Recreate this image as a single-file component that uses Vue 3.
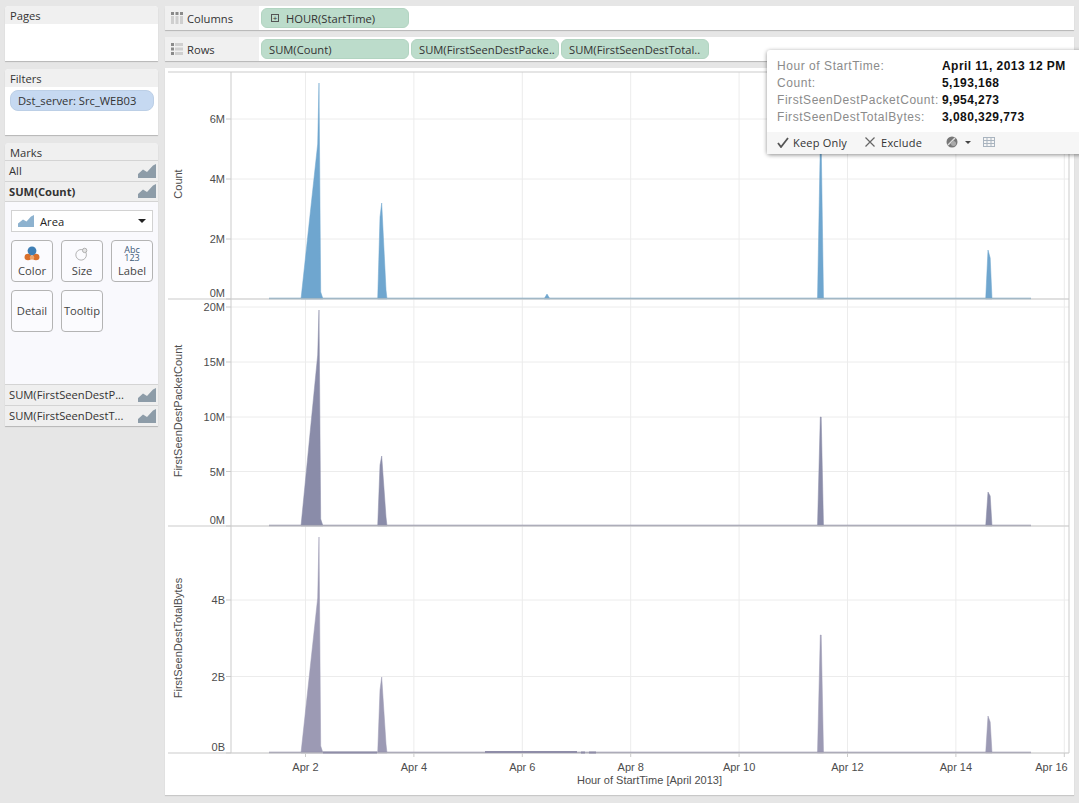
<template>
  <div class="page">
    <!-- left side cards -->
    <aside class="sidebar">
      <section class="card pages">
        <div class="card-title">Pages</div>
      </section>

      <section class="card filters">
        <div class="card-title">Filters</div>
        <div class="filter-pill">Dst_server: Src_WEB03</div>
      </section>

      <section class="card marks">
        <div class="card-title marks-title">Marks</div>
        <div v-for="row in topRows" :key="row.label" class="mark-row" :class="{ bold: row.bold }">
          <span>{{ row.label }}</span>
          <svg class="area-icon" viewBox="0 0 18 14"><path d="M0 14V10L5 5.5 9 8 15 1.5 18 0V14Z" /></svg>
        </div>

        <div class="marks-panel">
          <div class="mark-type">
            <svg class="type-icon" viewBox="0 0 16 12"><path d="M0 12V8.500L5 4.500 8.500 6.500 13 1.500 16 0V12Z" /></svg>
            <span class="type-name">Area</span>
            <span class="type-caret"></span>
          </div>

          <div class="mark-buttons">
            <div class="mark-btn with-icon">
              <svg class="btn-icon" viewBox="0 0 18 17">
                <ellipse cx="4.5" cy="12.5" rx="4" ry="3.6" fill="#d9702c" />
                <ellipse cx="13.5" cy="12.5" rx="4" ry="3.6" fill="#d9702c" />
                <circle cx="9" cy="13" r="2.5" fill="#eea46b" />
                <circle cx="9" cy="5.5" r="5" fill="#3f7fb5" />
              </svg>
              <span>Color</span>
            </div>
            <div class="mark-btn with-icon">
              <svg class="btn-icon" viewBox="0 0 18 17" fill="none" stroke="#a8a8a8">
                <circle cx="8" cy="10" r="6" />
                <circle cx="12" cy="5" r="2.5" fill="#e4e4e4" />
              </svg>
              <span>Size</span>
            </div>
            <div class="mark-btn with-icon">
              <div class="abc"><span>Abc</span><span>123</span></div>
              <span>Label</span>
            </div>
            <div class="mark-btn">Detail</div>
            <div class="mark-btn">Tooltip</div>
          </div>
        </div>

        <div v-for="row in bottomRows" :key="row" class="mark-row">
          <span>{{ row }}</span>
          <svg class="area-icon" viewBox="0 0 18 14"><path d="M0 14V10L5 5.5 9 8 15 1.5 18 0V14Z" /></svg>
        </div>
      </section>
    </aside>

    <main class="main">
      <div class="shelf">
        <div class="shelf-label">
          <svg class="shelf-icon" viewBox="0 0 12 12">
            <path d="M0 0h3v3H0zM4.500 0h3v3h-3zM9 0h3v3H9z" fill="#8a8a8a" />
            <path d="M0 4h3v8H0zM4.500 4h3v8h-3zM9 4h3v8H9z" fill="#cfcfcf" />
          </svg>
          Columns
        </div>
        <div class="pill">
          <span class="plus-box">+</span>
          <span>HOUR(StartTime)</span>
        </div>
      </div>

      <div class="shelf">
        <div class="shelf-label">
          <svg class="shelf-icon" viewBox="0 0 12 12">
            <path d="M0 0h3v3H0zM0 4.500h3v3H0zM0 9h3v3H0z" fill="#8a8a8a" />
            <path d="M4 0h8v3H4zM4 4.500h8v3H4zM4 9h8v3H4z" fill="#cfcfcf" />
          </svg>
          Rows
        </div>
        <div class="pill">SUM(Count)</div>
        <div class="pill">SUM(FirstSeenDestPacke..</div>
        <div class="pill">SUM(FirstSeenDestTotal..</div>
      </div>

      <div class="chart-card">
        <svg class="chart" viewBox="165 68 909 727">
          <!-- vertical grid -->
          <line v-for="t in xTicks" :key="t.label" class="grid" :x1="t.x" :x2="t.x" y1="72" y2="753" />

          <g v-for="pane in panes" :key="pane.title">
            <line v-for="t in pane.ticks" :key="t.label" class="grid" x1="231" x2="1069" :y1="t.y" :y2="t.y" />
            <line v-for="t in pane.ticks" :key="'m' + t.label" class="axis" x1="226" x2="231" :y1="t.y" :y2="t.y" />
            <text
              v-for="t in pane.ticks"
              :key="'l' + t.label"
              class="tick"
              x="225"
              :y="t.labelY ?? t.y + 4"
              text-anchor="end"
            >{{ t.label }}</text>
            <text
              class="tick"
              text-anchor="middle"
              :transform="`translate(182 ${pane.titleY}) rotate(-90)`"
            >{{ pane.title }}</text>
            <path :d="pane.area" :fill="pane.fill" :stroke="pane.fill" stroke-width="0.5" />
            <line x1="269" x2="1031" :y1="pane.base - 0.5" :y2="pane.base - 0.5" :stroke="pane.line" stroke-width="1.5" />
            <line class="axis" x1="168" x2="1069" :y1="pane.base" :y2="pane.base" />
          </g>

          <line class="axis" x1="168" x2="1069" y1="72" y2="72" />
          <line class="axis" x1="231" x2="231" y1="72" y2="753" />
          <line class="axis" x1="1069" x2="1069" y1="72" y2="753" />

          <!-- small noise on the bytes pane -->
          <path d="M323 752.500H377M485 752H577M581 752.500H585M589 752.500H596" stroke="#8f8da8" stroke-width="2" />

          <g v-for="t in xTicks" :key="'x' + t.label">
            <line class="axis" :x1="t.x" :x2="t.x" y1="753" y2="757" />
            <text class="tick" :x="t.labelX" y="771" text-anchor="middle">{{ t.label }}</text>
          </g>
          <text class="tick" x="649.500" y="784" text-anchor="middle">Hour of StartTime [April 2013]</text>
        </svg>
      </div>
    </main>

    <!-- hover tooltip -->
    <div class="tooltip">
      <div class="tip-body">
        <template v-for="row in tipRows" :key="row[0]">
          <span class="tip-label">{{ row[0] }}</span>
          <span class="tip-value">{{ row[1] }}</span>
        </template>
      </div>
      <div class="tip-actions">
        <svg class="tip-check" viewBox="0 0 12 11" fill="none" stroke="#555" stroke-width="1.800">
          <path d="M1 6l3 4 7-9" />
        </svg>
        <span class="keep">Keep Only</span>
        <svg class="tip-x" viewBox="0 0 10 10" fill="none" stroke="#666" stroke-width="1.200">
          <path d="M0.500 0.500l9 9M9.500 0.500l-9 9" />
        </svg>
        <span class="exclude">Exclude</span>
        <svg class="tip-set" viewBox="0 0 12 12">
          <circle cx="6" cy="6" r="5.500" fill="#777" />
          <path d="M2 9L9 2" stroke="#ddd" stroke-width="1.500" />
          <circle cx="7.500" cy="7.500" r="2.500" fill="#aaa" />
        </svg>
        <span class="tip-caret"></span>
        <svg class="tip-grid" viewBox="0 0 12 10" fill="none" stroke="#a9b4bf">
          <path d="M0 .5h12M0 3.500h12M0 6.500h12M0 9.500h12M.5 0v10M4 0v10M8 0v10M11.500 0v10" />
        </svg>
      </div>
    </div>
  </div>
</template>

<script setup>
const topRows = [
  { label: 'All', bold: false },
  { label: 'SUM(Count)', bold: true }
]
const bottomRows = ['SUM(FirstSeenDestP...', 'SUM(FirstSeenDestT...']

const tipRows = [
  ['Hour of StartTime:', 'April 11, 2013 12 PM'],
  ['Count:', '5,193,168'],
  ['FirstSeenDestPacketCount:', '9,954,273'],
  ['FirstSeenDestTotalBytes:', '3,080,329,773']
]

// 2 days = 108.4px on the time axis, last label is pulled in so it fits
const xTicks = [2, 4, 6, 8, 10, 12, 14, 16].map((d) => {
  const x = 305.5 + (d - 2) * 54.2
  return { label: `Apr ${d}`, x, labelX: d === 16 ? 1051.5 : x }
})

// builds the area outline from spike tops, b is the baseline
function spikes(b, a, c, d, e, e2, small) {
  let p = `M301 ${b}L317.7 ${a[1]}L319 ${a[0]}L320.7 ${b - 7}L323 ${b}Z`
  p += `M377.7 ${b}L380 ${c[1]}L381.7 ${c[0]}L386 ${b - 9}L387 ${b}Z`
  if (small) p += `M544 ${b}L547 ${small}L550 ${b}Z`
  p += `M817.5 ${b}L820.3 ${d}L821.2 ${d}L823.5 ${b}Z`
  p += `M985.7 ${b}L988 ${e}L990.2 ${e2}L992 ${b}Z`
  return p
}

const panes = [
  {
    title: 'Count',
    titleY: 184,
    base: 299,
    fill: '#6fa6cf',
    line: '#7aa5c2',
    area: spikes(299, [83, 144], [203, 217], 143, 250, 258, 294),
    ticks: [
      { label: '6M', y: 119 },
      { label: '4M', y: 179 },
      { label: '2M', y: 239 },
      { label: '0M', y: 299, labelY: 297 }
    ]
  },
  {
    title: 'FirstSeenDestPacketCount',
    titleY: 411,
    base: 526,
    fill: '#8a8ca9',
    line: '#8f90a8',
    area: spikes(526, [310, 355], [456, 465], 417, 492, 496),
    ticks: [
      { label: '20M', y: 307, labelY: 311 },
      { label: '15M', y: 362 },
      { label: '10M', y: 417 },
      { label: '5M', y: 471.5 },
      { label: '0M', y: 526, labelY: 524 }
    ]
  },
  {
    title: 'FirstSeenDestTotalBytes',
    titleY: 638,
    base: 753,
    fill: '#9c9ab4',
    line: '#8f8da8',
    area: spikes(753, [537, 598], [677, 690], 635, 716, 722),
    ticks: [
      { label: '4B', y: 600 },
      { label: '2B', y: 676.5 },
      { label: '0B', y: 753, labelY: 751 }
    ]
  }
]
</script>

<style>
html,
body {
  margin: 0;
  background: #e6e6e6;
  overflow: hidden;
}
</style>

<style scoped>
.page {
  position: relative;
  box-sizing: border-box;
  width: 1079px;
  height: 803px;
  padding: 6px 5px 8px;
  display: flex;
  gap: 7px;
  overflow: hidden;
  background: #e6e6e6;
  color: #333;
  font-family: "Open Sans", "Liberation Sans", sans-serif;
  font-size: 11.2px;
}

.sidebar {
  width: 153px;
  flex: none;
  display: flex;
  flex-direction: column;
  gap: 8px;
}
.card {
  background: #fff;
  border-radius: 4px 4px 0 0;
  box-shadow: 0 1px 1px #b5b5b5;
}
.card-title {
  height: 18px;
  box-sizing: border-box;
  padding: 1px 0 0 5px;
  line-height: 18px;
  background: #f0f0f0;
  border-radius: 4px 4px 0 0;
}
.pages {
  height: 55px;
}
.filters {
  height: 66px;
}
.filter-pill {
  margin: 3px 4px 0 5px;
  height: 21px;
  line-height: 19px;
  padding-left: 7px;
  box-sizing: border-box;
  background: #c6d9f1;
  border: 1px solid #bccfe6;
  border-radius: 8px;
  white-space: nowrap;
}

.marks {
  height: 283px;
  display: flex;
  flex-direction: column;
  background: #f9f9fd;
}
.marks-title {
  height: 17px;
}
.mark-row {
  height: 21px;
  box-sizing: border-box;
  display: flex;
  align-items: center;
  justify-content: space-between;
  padding: 0 2px 1px 4px;
  background: #efefef;
  border-top: 1px solid #d4d4d4;
  white-space: nowrap;
}
.mark-row.bold {
  height: 20px;
  font-weight: 700;
}
.area-icon {
  width: 18px;
  height: 14px;
  fill: #8d9ca8;
}
.marks-panel {
  flex: 1;
  padding: 8px 5px 0 6px;
  border-top: 1px solid #d4d4d4;
}
.mark-type {
  height: 22px;
  box-sizing: border-box;
  display: flex;
  align-items: center;
  background: #fff;
  border: 1px solid #d2d2d2;
  padding: 0 6px 0 6px;
}
.type-icon {
  width: 16px;
  height: 12px;
  fill: #8db2cf;
}
.type-name {
  margin-left: 6px;
  flex: 1;
  color: #222;
}
.type-caret {
  border: 4px solid transparent;
  border-top: 4px solid #222;
  border-bottom: 0;
}
.mark-buttons {
  margin-top: 8px;
  display: grid;
  grid-template-columns: repeat(3, 42px);
  grid-auto-rows: 42px;
  gap: 8px;
}
.mark-btn {
  box-sizing: border-box;
  display: flex;
  flex-direction: column;
  align-items: center;
  justify-content: center;
  background: #fbfbfe;
  border: 1px solid #b4b4b4;
  border-radius: 4px;
  line-height: 14px;
  color: #444;
}
.mark-btn.with-icon {
  justify-content: flex-start;
  padding-top: 5px;
}
.btn-icon {
  width: 16px;
  height: 15px;
  margin-bottom: 3px;
}
.abc {
  height: 16px;
  margin-bottom: 2px;
  display: flex;
  flex-direction: column;
  align-items: center;
  font-size: 9px;
  line-height: 8px;
  color: #3d5a78;
}

.main {
  flex: none;
  width: 909px;
  display: flex;
  flex-direction: column;
  gap: 7px;
}
.shelf {
  height: 24px;
  flex: none;
  display: flex;
  align-items: center;
  gap: 2px;
  background: #fff;
  box-shadow: 0 1px 1px #b5b5b5;
  border-radius: 3px 0 0 0;
}
.shelf-label {
  width: 94px;
  height: 100%;
  box-sizing: border-box;
  padding-left: 6px;
  display: flex;
  align-items: center;
  gap: 4px;
  background: #f0f0f0;
}
.shelf-icon {
  width: 12px;
  height: 12px;
}
.pill {
  width: 148px;
  height: 20px;
  box-sizing: border-box;
  padding-left: 7px;
  background: #bcdccb;
  border: 1px solid #b2d4c1;
  border-radius: 6px;
  white-space: nowrap;
  display: flex;
  align-items: center;
}
.plus-box {
  box-sizing: border-box;
  width: 8px;
  height: 8px;
  margin: 0 7px 0 2px;
  border: 1px solid #555;
  font-size: 8px;
  line-height: 6px;
  text-align: center;
  flex: none;
}

.chart-card {
  flex: 1;
  background: #fff;
  box-shadow: 0 1px 1px #c8c8c8;
}
.chart {
  display: block;
  width: 909px;
  height: 727px;
}
.grid {
  stroke: #ececec;
  stroke-width: 1;
}
.axis {
  stroke: #cbcbcb;
  stroke-width: 1;
}
.tick {
  font-family: "Liberation Sans", Arial, sans-serif;
  font-size: 11px;
  fill: #4d4d4d;
}

.tooltip {
  position: absolute;
  left: 767px;
  top: 50px;
  width: 330px;
  height: 104px;
  background: #fff;
  border-radius: 3px;
  box-shadow: 0 1px 4px rgba(0, 0, 0, 0.45);
  display: flex;
  flex-direction: column;
}
.tip-body {
  flex: 1;
  padding: 7px 0 0 10px;
  display: grid;
  grid-template-columns: 165px 1fr;
  grid-auto-rows: 17px;
  align-items: center;
  font-family: "Liberation Sans", Arial, sans-serif;
  font-size: 12px;
  white-space: nowrap;
}
.tip-label {
  color: #8b8b8b;
  letter-spacing: 0.55px;
}
.tip-value {
  color: #111;
  font-weight: 700;
  letter-spacing: 0.45px;
}
.tip-actions {
  height: 22px;
  box-sizing: border-box;
  padding: 0 0 2px 10px;
  display: flex;
  align-items: center;
  background: #f6f6f6;
  font-size: 11px;
  letter-spacing: 0.2px;
  color: #333;
}
.tip-check {
  width: 12px;
  height: 11px;
}
.keep {
  margin-left: 4px;
}
.tip-x {
  width: 10px;
  height: 10px;
  margin-left: 18px;
}
.exclude {
  margin-left: 6px;
}
.tip-set {
  width: 12px;
  height: 12px;
  margin-left: 24px;
}
.tip-caret {
  margin-left: 7px;
  border: 3px solid transparent;
  border-top: 3px solid #444;
  border-bottom: 0;
}
.tip-grid {
  width: 12px;
  height: 10px;
  margin-left: 12px;
}
</style>
